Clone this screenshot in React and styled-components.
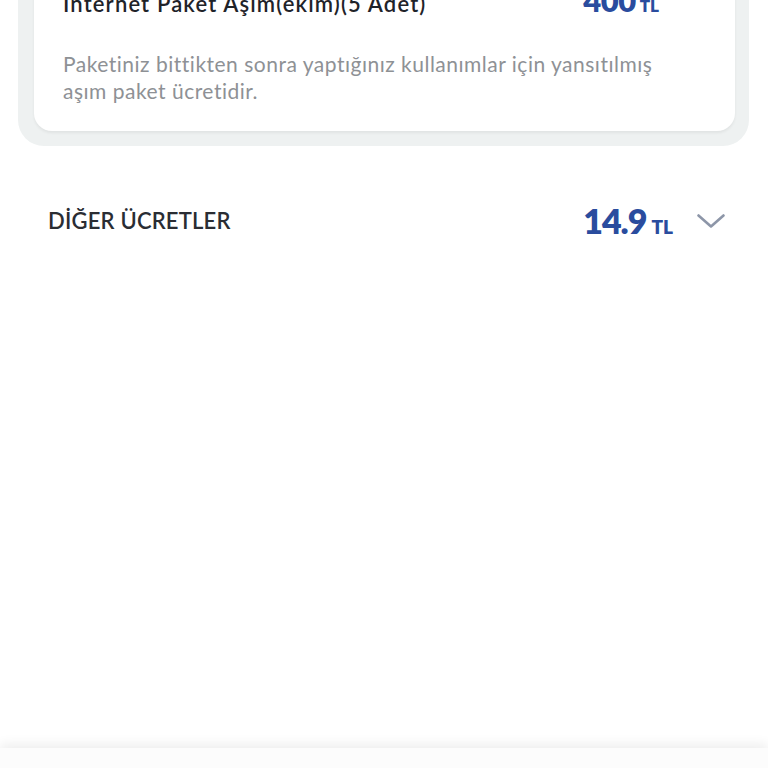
import React from "react";
import styled, { createGlobalStyle } from "styled-components";

const Global = createGlobalStyle`
  html, body { margin: 0; padding: 0; background: #ffffff; }
  body { font-family: "Lato", "Noto Sans", sans-serif; overflow: hidden; }
  * { box-sizing: border-box; }
`;

const Screen = styled.div`
  height: 768px;
  display: flex;
  flex-direction: column;
  overflow: hidden;
`;

const Content = styled.div`
  flex: 1;
`;

const Shell = styled.div`
  margin: -40px 19px 0 18px;
  padding: 0 14px 15px 16px;
  background: #eef1f1;
  border-radius: 0 0 26px 26px;
`;

const Card = styled.div`
  background: #ffffff;
  border-radius: 0 0 18px 18px;
  padding: 21px 76px 27px 29px;
  box-shadow: 0 2px 3px rgba(0, 0, 0, 0.06);
`;

const TitleRow = styled.div`
  display: flex;
  align-items: baseline;
  justify-content: space-between;
`;

const Title = styled.div`
  font-size: 22px;
  font-weight: 600;
  color: #1f2329;
  line-height: 28px;
  letter-spacing: 1.15px;
`;

const Price = styled.div`
  display: flex;
  align-items: baseline;
  gap: ${(p) => p.$gap || 4}px;
  color: #2a4c9e;
  font-weight: 800;
`;

const Amount = styled.span`
  font-size: ${(p) => p.$size}px;
  letter-spacing: ${(p) => p.$spacing ?? -0.5}px;
`;

const Unit = styled.span`
  font-size: ${(p) => p.$size}px;
`;

const Desc = styled.p`
  margin: 31px 0 0;
  font-size: 21px;
  line-height: 27px;
  letter-spacing: 0.5px;
  color: #8e9195;
  font-weight: 400;
`;

const Row = styled.div`
  display: flex;
  align-items: center;
  justify-content: space-between;
  padding: 54px 43px 0 48px;
`;

const RowLabel = styled.div`
  font-size: 22px;
  font-weight: 600;
  color: #2a2d33;
  letter-spacing: 0.2px;
`;

const RowRight = styled.div`
  display: flex;
  align-items: center;
  gap: 24px;
`;

const Footer = styled.div`
  height: 20px;
  background: #fcfcfc;
  box-shadow: 0 -4px 12px rgba(0, 0, 0, 0.07);
`;

const Chevron = () => (
  <svg width="28" height="14" viewBox="0 0 28 14" fill="none">
    <path d="M1.5 1.5 L14 12.5 L26.5 1.5" stroke="#8d96a8" strokeWidth="2.6" strokeLinecap="round" strokeLinejoin="round" />
  </svg>
);

export default function App() {
  return (
    <Screen>
      <Global />
      <Content>
        <Shell>
          <Card>
            <TitleRow>
              <Title>Internet Paket Aşım(ekim)(5 Adet)</Title>
              <Price>
                <Amount $size={31}>400</Amount>
                <Unit $size={17}>TL</Unit>
              </Price>
            </TitleRow>
            <Desc>
              Paketiniz bittikten sonra yaptığınız kullanımlar için yansıtılmış
              <br />
              aşım paket ücretidir.
            </Desc>
          </Card>
        </Shell>
        <Row>
          <RowLabel>DİĞER ÜCRETLER</RowLabel>
          <RowRight>
            <Price $gap={5}>
              <Amount $size={34} $spacing={-1}>14.9</Amount>
              <Unit $size={19}>TL</Unit>
            </Price>
            <Chevron />
          </RowRight>
        </Row>
      </Content>
      <Footer />
    </Screen>
  );
}
